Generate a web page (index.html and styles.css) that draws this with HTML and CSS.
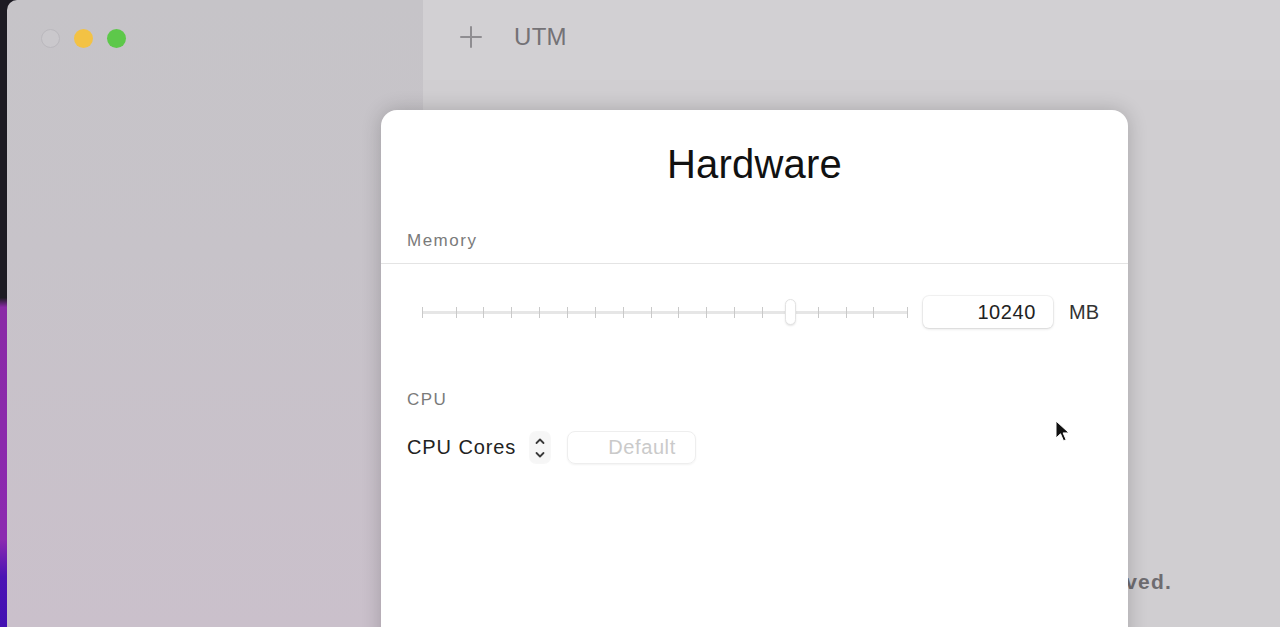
FILE: index.html
```html
<!DOCTYPE html>
<html lang="en">
<head>
<meta charset="utf-8">
<title>UTM – Hardware</title>
<link rel="stylesheet" href="styles.css">
</head>
<body>
<div class="screen">
  <div class="desktop-edge"></div>
  <div class="window">
    <aside class="sidebar">
      <div class="traffic">
        <span class="light light-close"></span>
        <span class="light light-min"></span>
        <span class="light light-max"></span>
      </div>
    </aside>
    <main class="main">
      <header class="toolbar">
        <svg class="plus" width="22" height="22" viewBox="0 0 22 22"><path d="M11 1v20M1 11h20" stroke="#8f8d91" stroke-width="2" fill="none" stroke-linecap="round"/></svg>
        <span class="app-title">UTM</span>
      </header>
      <div class="main-body">
        <p class="note">Your changes will be saved.</p>
      </div>
    </main>

    <section class="sheet">
      <h1 class="sheet-title">Hardware</h1>
      <div class="section-head">Memory</div>
      <div class="divider"></div>
      <div class="slider-row">
        <div class="track">
          <span class="tick"></span>
          <div class="tick-group">
            <span class="tick"></span><span class="tick"></span><span class="tick"></span><span class="tick"></span>
            <span class="tick"></span><span class="tick"></span><span class="tick"></span><span class="tick"></span>
            <span class="tick"></span><span class="tick"></span><span class="tick"></span><span class="tick"></span>
            <span class="tick"></span><span class="tick"></span><span class="tick"></span><span class="tick"></span>
          </div>
          <span class="tick"></span>
          <span class="knob"></span>
        </div>
        <div class="field">10240</div>
        <span class="unit">MB</span>
      </div>

      <div class="section-head cpu-head">CPU</div>
      <div class="cores-row">
        <span class="cores-label">CPU Cores</span>
        <span class="stepper">
          <svg width="14" height="30" viewBox="0 0 14 30"><path d="M3.5 10L7 6.5l3.5 3.5M3.5 20L7 23.5l3.5-3.5" stroke="#3a3a3a" stroke-width="1.8" fill="none" stroke-linecap="round" stroke-linejoin="round"/></svg>
        </span>
        <span class="default-btn">Default</span>
      </div>
    </section>
  </div>
  <svg class="cursor" width="16" height="24" viewBox="0 0 16 24"><path d="M1 1v17l4.5-4.2 3 7 2.6-1.1-3-6.8H14z" fill="#111" stroke="#fff" stroke-width="1" stroke-linejoin="round"/></svg>
</div>
</body>
</html>
```

FILE: styles.css
```css
* { box-sizing: border-box; }

html, body {
  margin: 0;
  padding: 0;
  width: 1280px;
  height: 627px;
  overflow: hidden;
  font-family: "Liberation Sans", Arial, sans-serif;
}

.screen {
  position: relative;
  display: flex;
  width: 1280px;
  height: 627px;
  background: #1c1a22;
}

.desktop-edge {
  width: 7px;
  flex: none;
  background: linear-gradient(#1d1b23 0%, #1d1b23 47.5%, #8a2aa6 49%, #8c2ab0 86%, #4b14b4 92%, #4210b2 100%);
}

.window {
  position: relative;
  flex: 1;
  display: flex;
  border-top-left-radius: 10px;
  overflow: hidden;
}

.sidebar {
  width: 416px;
  flex: none;
  background: linear-gradient(180deg, #c6c4c8 0%, #c7c3c9 40%, #cac0cb 100%);
}

.traffic {
  display: flex;
  gap: 14px;
  padding: 29px 0 0 34px;
}

.light {
  width: 19px;
  height: 19px;
  border-radius: 50%;
}
.light-close { background: #cac8cc; border: 1px solid #bab8bd; }
.light-min { background: #f3c244; }
.light-max { background: #5dc84a; }

.main {
  flex: 1;
  display: flex;
  flex-direction: column;
  background: #d0ced1;
}

.toolbar {
  height: 80px;
  flex: none;
  display: flex;
  align-items: center;
  padding: 0 0 6px 37px;
  background: #d2d0d3;
}

.plus { display: block; }

.app-title {
  margin-left: 32px;
  font-size: 24px;
  color: #747276;
  letter-spacing: 0.3px;
}

.main-body {
  flex: 1;
  display: flex;
  justify-content: flex-end;
  align-items: flex-end;
  padding: 0 108px 34px 0;
}

.note {
  margin: 0;
  font-size: 21px;
  line-height: 22px;
  font-weight: bold;
  color: #6e6c70;
  letter-spacing: 1.2px;
}

.sheet {
  position: absolute;
  left: 374px;
  top: 110px;
  width: 747px;
  height: 620px;
  background: #ffffff;
  border-radius: 16px;
  box-shadow: 0 0 20px rgba(0, 0, 0, 0.2);
}

.sheet-title {
  margin: 34px 0 0;
  font-size: 40px;
  line-height: 40px;
  font-weight: normal;
  text-align: center;
  color: #111;
  letter-spacing: 0.2px;
}

.section-head {
  margin: 47px 0 0 26px;
  font-size: 17px;
  line-height: 20px;
  color: #7a7a7a;
  letter-spacing: 1.5px;
}

.divider {
  margin-top: 12px;
  height: 1px;
  background: #e4e4e4;
}

.slider-row {
  margin-top: 32px;
  display: flex;
  align-items: center;
  padding-left: 41px;
  height: 32px;
}

.track {
  position: relative;
  width: 486px;
  height: 26px;
  display: flex;
  align-items: center;
  justify-content: space-between;
  background: linear-gradient(#e6e6e6, #e6e6e6) center / 100% 3px no-repeat;
}

.tick-group {
  width: 419px;
  display: flex;
  align-items: center;
  justify-content: space-between;
}

.tick {
  width: 1px;
  height: 11px;
  background: #c9c9c9;
}

.knob {
  position: absolute;
  left: 363px;
  top: 0;
  width: 11px;
  height: 26px;
  border-radius: 6px;
  background: #fff;
  border: 1px solid #e3e3e3;
  box-shadow: 0 1px 2px rgba(0, 0, 0, 0.1);
}

.field {
  margin-left: 15px;
  width: 130px;
  height: 32px;
  border-radius: 6px;
  background: #fff;
  box-shadow: 0 0 0 1px rgba(0, 0, 0, 0.04), 0 1px 3px rgba(0, 0, 0, 0.14);
  padding-right: 17px;
  text-align: right;
  font-size: 20px;
  line-height: 32px;
  color: #222;
  letter-spacing: 0.6px;
}

.unit {
  margin-left: 16px;
  font-size: 20px;
  color: #333;
}

.cpu-head {
  margin-top: 62px;
}

.cores-row {
  margin-top: 21px;
  display: flex;
  align-items: center;
  padding-left: 26px;
  height: 33px;
}

.cores-label {
  font-size: 20px;
  color: #222;
  letter-spacing: 0.9px;
}

.stepper {
  margin-left: 14px;
  width: 20px;
  height: 31px;
  border-radius: 6px;
  background: #f6f6f6;
  box-shadow: 0 0 0 1px rgba(0, 0, 0, 0.03);
  display: flex;
  align-items: center;
  justify-content: center;
}
.stepper svg { display: block; }

.default-btn {
  margin-left: 17px;
  width: 129px;
  height: 33px;
  border-radius: 8px;
  border: 1px solid #eeeeee;
  box-shadow: 0 1px 2px rgba(0, 0, 0, 0.05);
  padding-left: 40px;
  font-size: 20px;
  line-height: 31px;
  color: #cacaca;
  letter-spacing: 0.6px;
}

.cursor {
  position: absolute;
  left: 1055px;
  top: 420px;
}
```
